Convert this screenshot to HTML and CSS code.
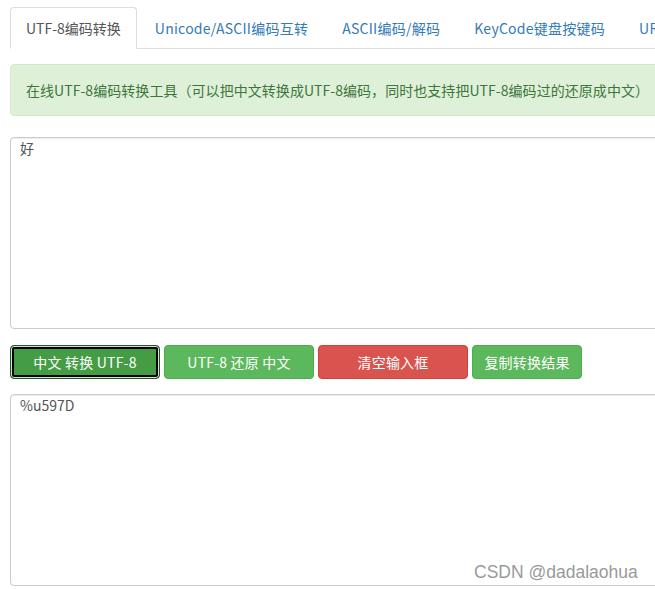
FILE: index.html
```html
<!DOCTYPE html>
<html lang="zh-CN">
<head>
<meta charset="utf-8">
<title>UTF-8编码转换</title>
<link rel="stylesheet" href="styles.css">
</head>
<body>
<div class="page">
  <ul class="tabs">
    <li class="tab active"><a>UTF-8编码转换</a></li>
    <li class="tab"><a>Unicode/ASCII编码互转</a></li>
    <li class="tab"><a>ASCII编码/解码</a></li>
    <li class="tab"><a>KeyCode键盘按键码</a></li>
    <li class="tab"><a>URL编码/解码</a></li>
  </ul>
  <div class="alert">在线UTF-8编码转换工具（可以把中文转换成UTF-8编码，同时也支持把UTF-8编码过的还原成中文）</div>
  <textarea class="box">好</textarea>
  <div class="btns">
    <button class="btn green focused">中文 转换 UTF-8</button>
    <button class="btn green">UTF-8 还原 中文</button>
    <button class="btn red">清空输入框</button>
    <button class="btn green narrow">复制转换结果</button>
  </div>
  <textarea class="box">%u597D</textarea>
</div>
<div class="watermark">CSDN @dadalaohua</div>
</body>
</html>
```
FILE: styles.css
```css
html, body {
  margin: 0;
  padding: 0;
  overflow: hidden;
  background: #fff;
}
body {
  width: 655px;
  height: 589px;
  position: relative;
  font-family: "Noto Sans CJK SC", "Noto Sans", sans-serif;
  font-size: 14px;
  color: #555;
}
.page {
  width: 1000px;
  padding: 7px 0 0 10px;
  display: flex;
  flex-direction: column;
}
.tabs {
  list-style: none;
  margin: 0;
  padding: 0;
  display: flex;
  border-bottom: 1px solid #ddd;
  height: 41px;
}
.tab {
  margin-right: 2px;
  margin-bottom: -1px;
}
.tab a {
  display: block;
  padding: 10px 15px;
  line-height: 20px;
  color: #337ab7;
  border: 1px solid transparent;
  border-radius: 4px 4px 0 0;
  white-space: nowrap;
  letter-spacing: 0.25px;
}
.tab.active a {
  color: #555;
  background: #fff;
  border-color: #ddd #ddd transparent #ddd;
  letter-spacing: 0;
}
.alert {
  margin-top: 15px;
  margin-bottom: 21px;
  padding: 15px;
  line-height: 20px;
  background: #dff0d8;
  border: 1px solid #d6e9c6;
  border-radius: 4px;
  color: #3c763d;
  white-space: nowrap;
  letter-spacing: 0.05px;
}
.box {
  display: block;
  box-sizing: border-box;
  width: 900px;
  height: 192px;
  margin: 0;
  padding: 0 9px;
  border: 1px solid #ccc;
  border-radius: 4px;
  box-shadow: inset 0 1px 1px rgba(0,0,0,.075);
  font-family: "Noto Sans CJK SC", "Noto Sans", sans-serif;
  font-size: 14px;
  line-height: 20px;
  color: #555;
  resize: none;
  outline: none;
}
.btns {
  display: flex;
  gap: 4px;
  margin: 16px 0 15px;
}
.btn {
  box-sizing: border-box;
  width: 150px;
  height: 34px;
  border: 1px solid transparent;
  border-radius: 4px;
  font-family: "Noto Sans CJK SC", "Noto Sans", sans-serif;
  font-size: 14px;
  color: #fff;
  padding: 0;
  cursor: pointer;
  letter-spacing: 0.2px;
}
.btn.narrow { width: 110px; }
.green { background: #5cb85c; border-color: #4cae4c; }
.red { background: #d9534f; border-color: #d43f3a; }
.btn.focused {
  background: #449d44;
  border-color: #255625;
  box-shadow: inset 0 0 0 1px #cfe3cf, inset 0 0 0 3px #000;
}
.watermark {
  position: absolute;
  left: 474px;
  top: 562px;
  font-family: "Liberation Sans", Arial, sans-serif;
  font-size: 17.5px;
  color: #9a9a9a;
  white-space: nowrap;
}
```
